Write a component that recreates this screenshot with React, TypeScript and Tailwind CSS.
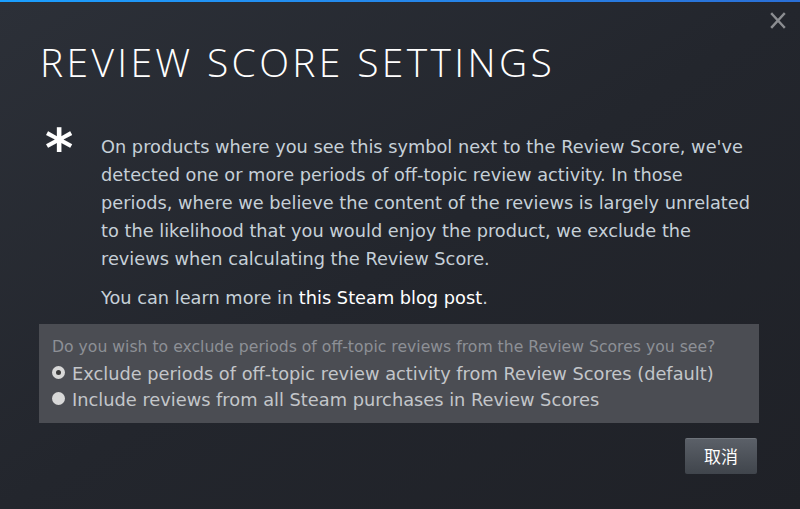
import React from 'react'

const font = { fontFamily: '"Open Sans", "Noto Sans", "Noto Sans CJK SC", sans-serif' }
const body = { fontFamily: '"DejaVu Sans", "Noto Sans", "Noto Sans CJK SC", sans-serif' }

export default function App() {
  return (
    <div
      className="w-[800px] h-[509px] relative overflow-hidden bg-gradient-to-br from-[#2c3038] via-[#23262d] to-[#1f2127] text-[#acb2b8]"
      style={font}
    >
      {/* top accent */}
      <div className="h-[2px] bg-gradient-to-r from-[#1a9fff] to-[#2a6fd6]" />

      {/* close */}
      <button className="absolute right-[14px] top-[12px] text-[#8b8d91]">
        <svg width="16" height="17" viewBox="0 0 16 17" stroke="currentColor" strokeWidth="2.4" strokeLinecap="square">
          <path d="M2 2 L14 15 M14 2 L2 15" />
        </svg>
      </button>

      <div className="px-[40px] pt-[36px]">
        <h1 className="text-[39px] font-light tracking-[3.35px] text-white leading-[48px]">
          REVIEW SCORE SETTINGS
        </h1>

        <div className="flex mt-[38px]" style={body}>
          <div className="w-[61px] shrink-0 pl-[5px] text-white text-[54px] font-bold leading-[50px]">*</div>
          <div className="text-[17.75px] leading-[28px] text-[#c6d0d8] pt-[9px]">
            <p>
              On products where you see this symbol next to the Review Score, we've<br />
              detected one or more periods of off-topic review activity. In those<br />
              periods, where we believe the content of the reviews is largely unrelated<br />
              to the likelihood that you would enjoy the product, we exclude the<br />
              reviews when calculating the Review Score.
            </p>
            <p className="mt-[11px]">
              You can learn more in <span className="text-white">this Steam blog post</span>.
            </p>
          </div>
        </div>
      </div>

      <div className="mx-[39px] mt-[12px] w-[720px] h-[99px] bg-[#4b4d53] px-[13px] pt-[12px]" style={body}>
        <p className="text-[15.65px] text-[#8d9096] leading-[22px] whitespace-nowrap">
          Do you wish to exclude periods of off-topic reviews from the Review Scores you see?
        </p>
        <label className="flex items-center gap-[7px] text-[17.8px] text-[#c3c6ca] leading-[26px] mt-[3px] whitespace-nowrap">
          <span className="w-[13px] h-[13px] rounded-full bg-[#d8d8d8] flex items-center justify-center -mt-[4px] shrink-0">
            <span className="w-[5px] h-[5px] rounded-full bg-[#3a3a3a]" />
          </span>
          Exclude periods of off-topic review activity from Review Scores (default)
        </label>
        <label className="flex items-center gap-[7px] text-[17.8px] text-[#c3c6ca] leading-[26px] whitespace-nowrap">
          <span className="w-[13px] h-[13px] rounded-full bg-[#d8d8d8] -mt-[4px] shrink-0" />
          Include reviews from all Steam purchases in Review Scores
        </label>
      </div>

      <div className="flex justify-end pr-[43px] mt-[15px]">
        <button className="w-[72px] h-[36px] rounded-[2px] bg-gradient-to-b from-[#5b6068] to-[#40454c] text-white text-[17px] border-t border-[#6e737a]">
          取消
        </button>
      </div>
    </div>
  )
}
